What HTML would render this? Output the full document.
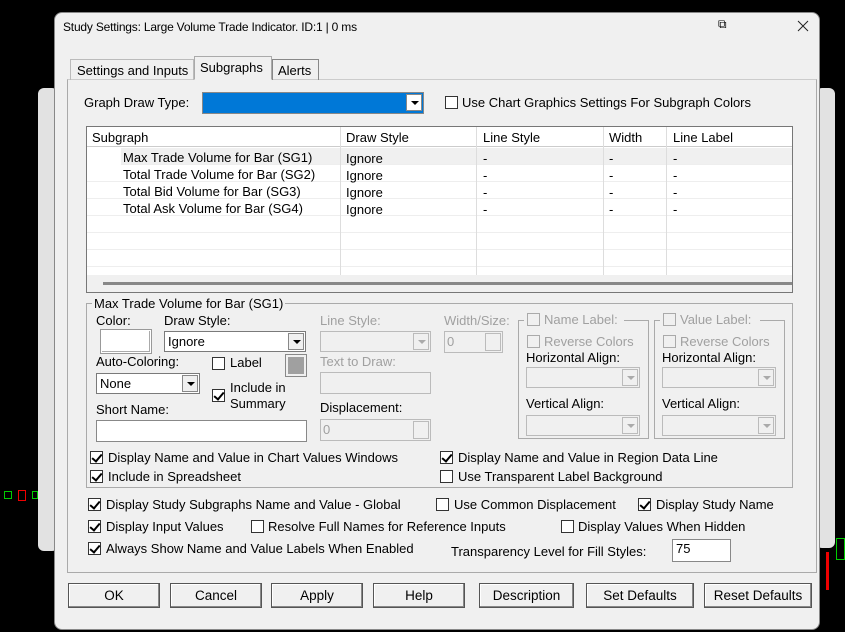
<!DOCTYPE html>
<html><head><style>
*{box-sizing:border-box;margin:0;padding:0}
body{width:845px;height:632px;background:#000;position:relative;overflow:hidden;font-family:"Liberation Sans",Arial,sans-serif;font-size:13px;color:#000}
.a{position:absolute;white-space:nowrap}
.dlg{position:absolute;left:54px;top:12px;width:766px;height:618px;background:#f0f0f0;border-radius:8px;border:1px solid #888}
.cb{position:absolute;width:13px;height:13px;border:1px solid #333;background:#fff}
.cb.on::after{content:"";position:absolute;left:3px;top:0px;width:4px;height:8px;border:solid #000;border-width:0 2px 2px 0;transform:rotate(40deg)}
.cb.dis{border-color:#aaa;background:#f0f0f0}
.g{color:#a0a0a0}
.sel{position:absolute;background:#fff;border:1px solid #7a7a7a;height:21px}
.sel.dis{background:#f0f0f0;border-color:#bbb}
.arr{position:absolute;right:1px;top:1px;width:16px;height:17px;background:#f0f0f0;border:1px solid #888}
.arr::after{content:"";position:absolute;left:4px;top:6px;border:4px solid transparent;border-top:4px solid #000;border-bottom:0}
.sel.dis .arr{border-color:#bbb}.sel.dis .arr::after{border-top-color:#aaa}
.btn{position:absolute;top:583px;height:25px;border:1px solid #555;background:#f0f0f0;box-shadow:inset -1px -1px #888,inset 1px 1px #fff;text-align:center;line-height:23px;font-size:13.5px}
.grp{position:absolute;border:1px solid #aaa}
.row{position:absolute;left:87px;width:705px;height:17px;border-bottom:1px solid #eee}
</style></head><body>
<div class="a" style="left:38px;top:88px;width:20px;height:463px;background:#e2e2e2;border-radius:6px"></div>
<div class="a" style="left:816px;top:88px;width:19px;height:460px;background:#e2e2e2;border-radius:6px"></div>
<div class="a" style="left:4px;top:491px;width:8px;height:8px;border:1px solid #0c0"></div>
<div class="a" style="left:18px;top:490px;width:8px;height:11px;border:1px solid #e00"></div>
<div class="a" style="left:32px;top:491px;width:6px;height:8px;border:1px solid #0c0"></div>
<div class="a" style="left:826px;top:552px;width:3px;height:38px;background:#e00"></div>
<div class="a" style="left:836px;top:538px;width:9px;height:22px;border:1px solid #0c0"></div>
<div class="dlg"></div>
<div class="a" style="left:63px;top:20px;font-size:12px;letter-spacing:-0.2px">Study Settings: Large Volume Trade Indicator. ID:1 | 0 ms</div>
<div class="a" style="left:718px;top:17px;font-size:12px">⧉</div>
<svg class="a" style="left:797px;top:20px" width="12" height="12"><path d="M1 1L11 11M11 1L1 11" stroke="#222" stroke-width="1"/></svg>
<!-- tabs -->
<div class="a" style="left:67px;top:79px;width:750px;height:494px;border:1px solid #aaa;border-top-color:#ccc"></div>
<div class="a" style="left:70px;top:59px;width:124px;height:21px;border:1px solid #bbb;border-bottom:0;padding:3px 6px">Settings and Inputs</div>
<div class="a" style="left:194px;top:56px;width:78px;height:24px;border:1px solid #aaa;border-bottom:1px solid #f0f0f0;background:#f0f0f0;padding:3px 5px">Subgraphs</div>
<div class="a" style="left:272px;top:59px;width:47px;height:21px;border:1px solid #888;border-bottom:0;padding:3px 5px">Alerts</div>
<div class="a" style="left:84px;top:95px">Graph Draw Type:</div>
<div class="sel" style="left:202px;top:92px;width:222px;height:22px;background:#0078d7;border-color:#888"><div class="arr" style="background:#fff"></div></div>
<div class="cb" style="left:445px;top:96px"></div>
<div class="a" style="left:462px;top:95px">Use Chart Graphics Settings For Subgraph Colors</div>
<!-- table -->
<div class="a" style="left:86px;top:126px;width:707px;height:167px;border:1px solid #777;background:#fff"></div>
<div class="a" style="left:87px;top:127px;width:705px;height:20px;background:#fff;border-bottom:1px solid #ccc"></div>
<div class="a" style="left:92px;top:130px">Subgraph</div>
<div class="a" style="left:346px;top:130px">Draw Style</div>
<div class="a" style="left:483px;top:130px">Line Style</div>
<div class="a" style="left:609px;top:130px">Width</div>
<div class="a" style="left:673px;top:130px">Line Label</div>
<div class="row" style="top:148px;background:#f0f0f0"><div class="a" style="left:0;top:0;width:34px;height:17px;background:#fff"></div></div>
<div class="row" style="top:165px"></div><div class="row" style="top:182px"></div><div class="row" style="top:199px"></div>
<div class="row" style="top:216px"></div><div class="row" style="top:233px"></div><div class="row" style="top:250px"></div>
<div class="a" style="left:340px;top:127px;width:1px;height:148px;background:#ddd"></div>
<div class="a" style="left:476px;top:127px;width:1px;height:148px;background:#ddd"></div>
<div class="a" style="left:603px;top:127px;width:1px;height:148px;background:#ddd"></div>
<div class="a" style="left:666px;top:127px;width:1px;height:148px;background:#ddd"></div>
<div class="a" style="left:87px;top:275px;width:705px;height:17px;background:#f0f0f0"></div>
<div class="a" style="left:103px;top:282px;width:689px;height:3px;background:#888"></div>
<div class="a" style="left:123px;top:150px">Max Trade Volume for Bar (SG1)</div>
<div class="a" style="left:123px;top:167px">Total Trade Volume for Bar (SG2)</div>
<div class="a" style="left:123px;top:184px">Total Bid Volume for Bar (SG3)</div>
<div class="a" style="left:123px;top:201px">Total Ask Volume for Bar (SG4)</div>
<div class="a" style="left:346px;top:150px;line-height:17px">Ignore<br>Ignore<br>Ignore<br>Ignore</div>
<div class="a" style="left:483px;top:150px;line-height:17px">-<br>-<br>-<br>-</div>
<div class="a" style="left:609px;top:150px;line-height:17px">-<br>-<br>-<br>-</div>
<div class="a" style="left:673px;top:150px;line-height:17px">-<br>-<br>-<br>-</div>
<!-- group -->
<div class="grp" style="left:86px;top:303px;width:707px;height:185px"></div>
<div class="a" style="left:92px;top:296px;background:#f0f0f0;padding:0 2px">Max Trade Volume for Bar (SG1)</div>
<div class="a" style="left:96px;top:313px">Color:</div>
<div class="a" style="left:100px;top:329px;width:52px;height:25px;border:1px solid #999;box-shadow:inset 0 0 0 1px #fff,inset -2px -2px #aaa;background:#fff"></div>
<div class="a" style="left:164px;top:313px">Draw Style:</div>
<div class="sel" style="left:164px;top:331px;width:142px"><div class="arr"></div></div>
<div class="a" style="left:168px;top:334px">Ignore</div>
<div class="a" style="left:96px;top:354px">Auto-Coloring:</div>
<div class="sel" style="left:96px;top:373px;width:104px"><div class="arr"></div></div>
<div class="a" style="left:100px;top:376px">None</div>
<div class="cb" style="left:212px;top:357px"></div><div class="a" style="left:230px;top:355px">Label</div>
<div class="a" style="left:285px;top:354px;width:22px;height:23px;border:1px solid #888;background:#a0a0a0;box-shadow:inset 0 0 0 2px #f0f0f0"></div>
<div class="cb on" style="left:212px;top:389px"></div>
<div class="a" style="left:230px;top:380px;line-height:16px">Include in<br>Summary</div>
<div class="a" style="left:96px;top:402px">Short Name:</div>
<div class="a" style="left:96px;top:420px;width:211px;height:22px;border:1px solid #888;background:#fff"></div>
<div class="a g" style="left:320px;top:313px">Line Style:</div>
<div class="sel dis" style="left:320px;top:331px;width:111px"><div class="arr"></div></div>
<div class="a g" style="left:320px;top:354px">Text to Draw:</div>
<div class="a" style="left:320px;top:372px;width:111px;height:22px;border:1px solid #bbb"></div>
<div class="a" style="left:320px;top:400px">Displacement:</div>
<div class="a" style="left:320px;top:419px;width:111px;height:22px;border:1px solid #bbb"></div>
<div class="a g" style="left:323px;top:422px">0</div>
<div class="a" style="left:413px;top:421px;width:16px;height:18px;border:1px solid #bbb"></div>
<div class="a g" style="left:444px;top:313px">Width/Size:</div>
<div class="a" style="left:444px;top:331px;width:59px;height:22px;border:1px solid #bbb"></div>
<div class="a g" style="left:447px;top:334px">0</div>
<div class="a" style="left:485px;top:333px;width:16px;height:18px;border:1px solid #bbb"></div>
<div class="grp" style="left:518px;top:320px;width:131px;height:119px"></div>
<div class="a" style="left:524px;top:312px;background:#f0f0f0;width:100px;height:16px"></div>
<div class="cb dis" style="left:527px;top:313px"></div><div class="a g" style="left:544px;top:312px">Name Label:</div>
<div class="cb dis" style="left:527px;top:335px"></div><div class="a g" style="left:544px;top:334px">Reverse Colors</div>
<div class="a" style="left:526px;top:350px">Horizontal Align:</div>
<div class="sel dis" style="left:526px;top:367px;width:114px"><div class="arr"></div></div>
<div class="a" style="left:526px;top:396px">Vertical Align:</div>
<div class="sel dis" style="left:526px;top:415px;width:114px"><div class="arr"></div></div>
<div class="grp" style="left:654px;top:320px;width:131px;height:119px"></div>
<div class="a" style="left:660px;top:312px;background:#f0f0f0;width:100px;height:16px"></div>
<div class="cb dis" style="left:663px;top:313px"></div><div class="a g" style="left:680px;top:312px">Value Label:</div>
<div class="cb dis" style="left:663px;top:335px"></div><div class="a g" style="left:680px;top:334px">Reverse Colors</div>
<div class="a" style="left:662px;top:350px">Horizontal Align:</div>
<div class="sel dis" style="left:662px;top:367px;width:114px"><div class="arr"></div></div>
<div class="a" style="left:662px;top:396px">Vertical Align:</div>
<div class="sel dis" style="left:662px;top:415px;width:114px"><div class="arr"></div></div>
<div class="cb on" style="left:90px;top:451px"></div><div class="a" style="left:108px;top:450px">Display Name and Value in Chart Values Windows</div>
<div class="cb on" style="left:90px;top:470px"></div><div class="a" style="left:108px;top:469px">Include in Spreadsheet</div>
<div class="cb on" style="left:440px;top:451px"></div><div class="a" style="left:458px;top:450px">Display Name and Value in Region Data Line</div>
<div class="cb" style="left:440px;top:470px"></div><div class="a" style="left:458px;top:469px">Use Transparent Label Background</div>
<div class="cb on" style="left:88px;top:498px"></div><div class="a" style="left:106px;top:497px">Display Study Subgraphs Name and Value - Global</div>
<div class="cb on" style="left:88px;top:520px"></div><div class="a" style="left:106px;top:519px">Display Input Values</div>
<div class="cb on" style="left:88px;top:542px"></div><div class="a" style="left:106px;top:541px">Always Show Name and Value Labels When Enabled</div>
<div class="cb" style="left:436px;top:498px"></div><div class="a" style="left:454px;top:497px">Use Common Displacement</div>
<div class="cb on" style="left:638px;top:498px"></div><div class="a" style="left:656px;top:497px">Display Study Name</div>
<div class="cb" style="left:251px;top:520px"></div><div class="a" style="left:268px;top:519px">Resolve Full Names for Reference Inputs</div>
<div class="cb" style="left:561px;top:520px"></div><div class="a" style="left:578px;top:519px">Display Values When Hidden</div>
<div class="a" style="left:451px;top:544px">Transparency Level for Fill Styles:</div>
<div class="a" style="left:672px;top:539px;width:59px;height:23px;border:1px solid #888;background:#fff;padding:1px 3px">75</div>
<div class="btn" style="left:68px;width:92px">OK</div>
<div class="btn" style="left:170px;width:92px">Cancel</div>
<div class="btn" style="left:271px;width:92px">Apply</div>
<div class="btn" style="left:373px;width:92px">Help</div>
<div class="btn" style="left:479px;width:95px">Description</div>
<div class="btn" style="left:586px;width:108px">Set Defaults</div>
<div class="btn" style="left:704px;width:108px">Reset Defaults</div>
</body></html>
